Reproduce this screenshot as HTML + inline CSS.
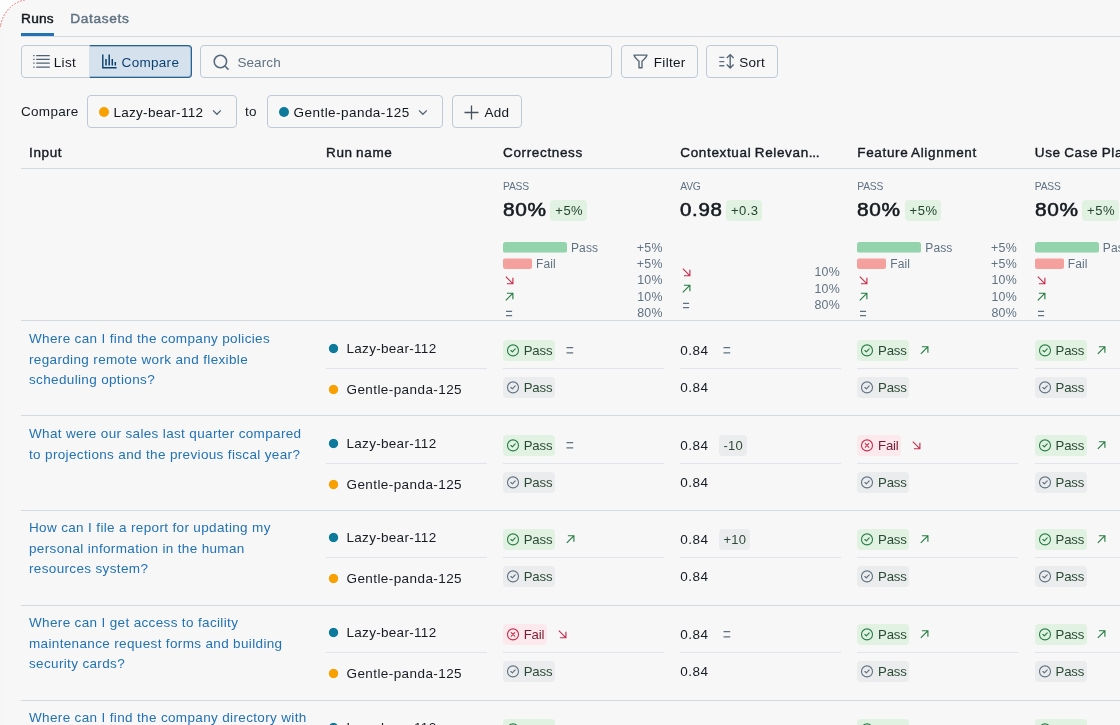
<!DOCTYPE html>
<html lang="en">
<head>
<meta charset="utf-8">
<title>Runs – Compare</title>
<style>
*{box-sizing:border-box;margin:0;padding:0}
html,body{width:1120px;height:725px;overflow:hidden;background:#f7f7f7}
body{font-family:"Liberation Sans",sans-serif;font-size:13.5px;color:#161c22;position:relative;letter-spacing:.3px}
svg{display:block;flex:none;overflow:visible}
#app{position:absolute;left:0;top:0;width:1120px;height:725px;overflow:hidden;will-change:transform}
.corner{position:absolute;left:0;top:0;width:30px;height:30px}
.edge{position:absolute;left:0;top:27px;width:2px;height:698px;background:#f6f6f6}
.tabs{position:absolute;left:21px;top:0;right:0;height:37px;border-bottom:1px solid #d1d9e1}
.tab{position:absolute;top:11px;font-weight:normal;-webkit-text-stroke:.45px currentColor;font-size:13.7px;line-height:16px;letter-spacing:.25px}
.tab.on{left:0;color:#11171c}
.tab.off{left:49.3px;color:#5f7281;letter-spacing:.65px}
.tab.on:after{content:"";position:absolute;left:-.5px;right:-.3px;top:22px;height:3px;background:#2272b4}
.btn{position:absolute;height:33px;border:1px solid #bdc9d6;border-radius:4px;display:flex;align-items:center;font-size:13.5px;color:#11171c;padding-top:1px}
.seg{left:21px;top:45px;width:170.5px}
.seg .on{position:absolute;left:67px;top:-1px;width:102.5px;height:33px;padding-top:1px;border:1px solid #2a628f;border-left-color:#d5e1ed;border-radius:0 4px 4px 0;background:#d5e1ed;color:#0c4272;box-shadow:inset 0 1px 0 rgba(14,83,139,.28),inset 0 -1px 0 rgba(14,83,139,.28),inset -1px 0 0 rgba(14,83,139,.28);display:flex;align-items:center}
.cmp{position:absolute;left:21px;top:104px;line-height:16px}
.to{position:absolute;left:245px;top:104px;line-height:16px}
.dot{display:inline-block;width:10px;height:10px;border-radius:50%;flex:none}
.dot.org{background:#f7a000}
.dot.teal{background:#0e7a9b}
.table{position:absolute;left:21px;top:137px;width:1200px}
.thead{display:flex;height:32px;border-bottom:1px solid #d1d9e1;font-weight:normal;-webkit-text-stroke:.4px currentColor;line-height:32px;letter-spacing:.65px;word-spacing:-1px;white-space:nowrap}
.thead b{font-weight:normal;letter-spacing:-.3px}
.c0{width:297px;flex:none;padding-left:8px}
.h,.s,.rn,.m{width:177.2px;flex:none;padding-left:8px}
.h.c0{width:297px}
.w1{width:177px}.w2{width:177.3px}.w3{width:177px}.w4{width:177.5px}.w5{width:177px}
.summary{display:flex;height:152px;border-bottom:1px solid #d1d9e1}
.row{display:flex;height:95px;border-bottom:1px solid #d1d9e1}
.q{color:#2272b4;line-height:20.6px;padding-top:8px;letter-spacing:.35px;white-space:nowrap}
.s{position:relative}
.row.up>div{position:relative;top:-1px}
.lbl{position:absolute;left:8px;top:12px;font-size:10.3px;line-height:12px;color:#5f7281;letter-spacing:-.2px}
.bigrow{position:absolute;left:8px;top:30px;height:21px;display:flex;align-items:center}
.big{font-size:18.6px;font-weight:normal;-webkit-text-stroke:.55px #11171c;letter-spacing:.6px;line-height:21px;display:inline-block;width:42px;white-space:nowrap}
.big i{font-style:normal;display:inline-block;transform:scaleX(1.12);transform-origin:0 50%}
.bd{margin-left:5.3px;height:21px;line-height:21px;padding:0 4px 0 5px;border-radius:4px;background:#e1f2e3;color:#22452c;font-size:13px;letter-spacing:.5px;position:relative;top:1px}
.dist{position:absolute;left:8px;top:71px;width:159.7px;height:83px;font-size:12.4px;color:#5f7281;letter-spacing:.2px}
.dist.c{top:95px}
.big.v{width:40.5px}
.big.v i{transform:scaleX(1.1)}
.big.v + .bd{padding:0 3.6px 0 4.8px;letter-spacing:.5px}
.dl{height:16px;position:relative}
.dl.t{height:17px}
.bar{height:11px;border-radius:2.5px;position:absolute;left:0;top:2px}
.bar.g{width:64px;background:linear-gradient(to bottom,#93d4ad 0,#93d4ad 10px,rgba(147,212,173,.55) 10px)}
.bar.r{width:29px;background:linear-gradient(to bottom,rgba(244,160,157,.5) 0,rgba(244,160,157,.5) 1px,#f4a09d 1px)}
.pv{position:absolute;right:0;top:0;line-height:16px;letter-spacing:.25px}
.bt{font-size:12px;letter-spacing:.1px;position:absolute;top:0;line-height:16px}
.bar.g + .bt{left:68px}
.bar.r + .bt{left:33px}
.ar{width:11px;height:11px}
.ar.up{color:#277c43}
.ar.down{color:#c82d4c}
.ar.eq{color:#5f7281}
.dl .ar{position:absolute;left:1px;top:0;width:11px;height:100%}
.rn,.m{position:relative}
.r1{position:absolute;left:8px;top:19px;height:21px;width:161px;display:flex;align-items:center}
.r2{position:absolute;left:8px;top:56px;height:21px;width:161px;display:flex;align-items:center}
.rn .r1{top:16.5px;left:8px}
.rn .r2{top:57.5px;left:8px}
.rn:after,.m:after{content:"";position:absolute;left:8px;width:161px;top:47px;height:1px;background:#e0e5ea}
.rn .dot{width:11px;height:11px;margin-left:2.3px;border-radius:0;background:none}
.rn .dot.teal{background:radial-gradient(circle at 50% 50%,#0e7a9b 4.2px,rgba(14,122,155,0) 5.1px)}
.rn .dot.org{background:radial-gradient(circle at 50% 50%,#f7a000 4.2px,rgba(247,160,0,0) 5.1px)}
.rn .nm{margin-left:7.2px}
.nm{margin-left:8px}
.r2 .nm{letter-spacing:.42px}
.tag{display:inline-flex;align-items:center;height:21px;border-radius:4px;padding:0 2.6px 0 3px;font-size:13.2px;letter-spacing:-.15px;color:#2a4a33}

.tag.pass{background:#e1f2e3}
.tag.fail{background:#fbe9ed;color:#7a1c31}
.tag.base{background:#ebecee}
.tag .ci{width:14px;height:15px;margin-right:3.7px}
.tag.pass .ci{color:#277c43}
.tag.fail .ci{color:#c82d4c}
.tag.base .ci{color:#5f7281}
.r1 .ar{margin-left:9.7px}
.num{width:30px;letter-spacing:.5px;white-space:nowrap}
.delta{margin-left:8.7px;height:21px;line-height:21px;padding:0 3.6px 0 4.6px;border-radius:4px;background:#ebecee;font-size:13px;letter-spacing:.2px;color:#2f4a36}
.m.n .ar{margin-left:11.5px}
</style>
</head>
<body>
<div id="app">
<svg class="corner" viewBox="0 0 30 30"><path d="M0 0H25L22.6 0.4L19.6 1.4L17.4 2.4L15.4 3.5L12.4 5.5L8.4 9.2L6.5 11.4L3.5 16.4L1.5 21.6L0.3 27Z" fill="#fdfdfd"/><path d="M24.5 0L22.6 0.4L19.6 1.4L17.4 2.4L15.4 3.5L12.4 5.5L8.4 9.2L6.5 11.4L3.5 16.4L1.5 21.6L0.4 26.4" fill="none" stroke="#ee6a62" stroke-width="1" stroke-dasharray="0.9 2.3" stroke-linecap="round"/><path d="M0.4 25.4V28" stroke="#f08a84" stroke-width="1" fill="none"/></svg>
<div class="edge"></div>
<div class="tabs"><div class="tab on">Runs</div><div class="tab off">Datasets</div></div>

<div class="btn seg">
  <svg style="margin-left:11px;position:relative;top:-1px" width="18" height="14" viewBox="0 0 18 14"><path d="M0.2 1.6h1.4M0.2 5.4h1.4M0.2 9.2h1.4M0.2 13h1.4" stroke="#4f6274" stroke-width="1.25" fill="none"/><path d="M3.2 1.6h13.6M3.2 5.4h13.6M3.2 9.2h13.6M3.2 13h13.6" stroke="#4f6274" stroke-width="1.25" fill="none"/></svg>
  <span style="margin-left:2.8px">List</span>
  <div class="on">
    <svg style="margin-left:12px;position:relative;top:-1px" width="15" height="15" viewBox="0 0 15 15"><path d="M0.8 0.4V13.8H14.6" stroke="#0b3f6c" stroke-width="1.4" fill="none"/><path d="M4.0 4.9v6.7M7.2 0.6v11M10.3 4.9v6.7M13.3 8v3.6" stroke="#0b3f6c" stroke-width="1.5" fill="none"/></svg>
    <span style="margin-left:4.6px">Compare</span>
  </div>
</div>
<div class="btn" style="left:200px;top:45px;width:412px;color:#5f7281">
  <svg style="margin-left:12px" width="16" height="16" viewBox="0 0 16 16"><circle cx="7.4" cy="7.5" r="6.2" stroke="#566a7b" stroke-width="1.55" fill="none"/><path d="M11.9 12l3.6 3.6" stroke="#566a7b" stroke-width="1.55" fill="none"/></svg>
  <span style="margin-left:8.4px;letter-spacing:.1px">Search</span>
</div>
<div class="btn" style="left:621px;top:45px;width:77px">
  <svg style="margin-left:11.3px;position:relative;top:-1px" width="15" height="16" viewBox="0 0 15 16"><path d="M1 2.1h13c-0.3 1.6-2.2 3.6-5 6.2v6.4h-3v-6.4c-2.8-2.6-4.7-4.6-5-6.2z" stroke="#536474" stroke-width="1.35" fill="none" stroke-linejoin="round"/></svg>
  <span style="margin-left:5.5px">Filter</span>
</div>
<div class="btn" style="left:706px;top:45px;width:72px">
  <svg style="margin-left:11.7px;position:relative;top:-1px" width="16" height="16" viewBox="0 0 16 16"><path d="M0.3 4.4h5M0.3 8.6h5M0.3 12.8h5" stroke="#5f7281" stroke-width="1.4" fill="none"/><path d="M11.2 1.6v13.4M7.8 5l3.4-3.4 3.4 3.4M7.8 11.6l3.4 3.4 3.4-3.4" stroke="#536474" stroke-width="1.35" fill="none"/></svg>
  <span style="margin-left:4.5px">Sort</span>
</div>

<div class="cmp">Compare</div>
<div class="btn" style="left:87px;top:95px;width:150px">
  <span class="dot org" style="margin-left:10.8px"></span><span style="margin-left:4.6px">Lazy-bear-112</span>
  <svg style="margin-left:8.4px" width="10" height="7" viewBox="0 0 10 7"><path d="M1 1.4l3.9 3.9 3.9-3.9" stroke="#536474" stroke-width="1.3" fill="none"/></svg>
</div>
<div class="to">to</div>
<div class="btn" style="left:267px;top:95px;width:176px">
  <span class="dot teal" style="margin-left:10.8px"></span><span style="margin-left:4.8px;letter-spacing:.45px">Gentle-panda-125</span>
  <svg style="margin-left:8.4px" width="10" height="7" viewBox="0 0 10 7"><path d="M1 1.4l3.9 3.9 3.9-3.9" stroke="#536474" stroke-width="1.3" fill="none"/></svg>
</div>
<div class="btn" style="left:451.5px;top:95px;width:70.5px">
  <svg style="margin-left:11.7px" width="15" height="15" viewBox="0 0 15 15"><path d="M7.5 0.5v14M0.5 7.5h14" stroke="#44535f" stroke-width="1.3" fill="none"/></svg>
  <span style="margin-left:5.3px">Add</span>
</div>

<div class="table">
<div class="thead"><div class="h c0">Input</div><div class="h w1">Run name</div><div class="h w2">Correctness</div><div class="h w3">Contextual Relevan<b>...</b></div><div class="h w4">Feature Alignment</div><div class="h w5">Use Case Pla</div></div>
<div class="summary"><div class="c0"></div><div class="s w1"></div><div class="s w2"><div class="lbl">PASS</div><div class="bigrow"><span class="big"><i>80%</i></span><span class="bd">+5%</span></div><div class="dist"><div class="dl"><span class="bar g"></span><span class="bt">Pass</span><span class="pv">+5%</span></div><div class="dl"><span class="bar r"></span><span class="bt">Fail</span><span class="pv">+5%</span></div><div class="dl t"><svg class="ar down" viewBox="0 0 11 11"><path d="M1.8 1.6 L8.8 8.6 M2.9 8.7 H8.9 V2.7" fill="none" stroke="currentColor" stroke-width="1.15"/></svg><span class="pv">10%</span></div><div class="dl"><svg class="ar up" viewBox="0 0 11 11"><path d="M1.8 8.8 L8.8 1.8 M2.9 1.7 H8.9 V7.7" fill="none" stroke="currentColor" stroke-width="1.15"/></svg><span class="pv">10%</span></div><div class="dl"><svg class="ar eq" viewBox="0 0 11 11"><path d="M2 3.9 H8.1 M2 8.2 H8.1" fill="none" stroke="currentColor" stroke-width="1.2"/></svg><span class="pv">80%</span></div></div></div><div class="s w3"><div class="lbl">AVG</div><div class="bigrow"><span class="big v"><i>0.98</i></span><span class="bd">+0.3</span></div><div class="dist c"><div class="dl t"><svg class="ar down" viewBox="0 0 11 11"><path d="M1.8 1.6 L8.8 8.6 M2.9 8.7 H8.9 V2.7" fill="none" stroke="currentColor" stroke-width="1.15"/></svg><span class="pv">10%</span></div><div class="dl"><svg class="ar up" viewBox="0 0 11 11"><path d="M1.8 8.8 L8.8 1.8 M2.9 1.7 H8.9 V7.7" fill="none" stroke="currentColor" stroke-width="1.15"/></svg><span class="pv">10%</span></div><div class="dl"><svg class="ar eq" viewBox="0 0 11 11"><path d="M2 3.9 H8.1 M2 8.2 H8.1" fill="none" stroke="currentColor" stroke-width="1.2"/></svg><span class="pv">80%</span></div></div></div><div class="s w4"><div class="lbl">PASS</div><div class="bigrow"><span class="big"><i>80%</i></span><span class="bd">+5%</span></div><div class="dist"><div class="dl"><span class="bar g"></span><span class="bt">Pass</span><span class="pv">+5%</span></div><div class="dl"><span class="bar r"></span><span class="bt">Fail</span><span class="pv">+5%</span></div><div class="dl t"><svg class="ar down" viewBox="0 0 11 11"><path d="M1.8 1.6 L8.8 8.6 M2.9 8.7 H8.9 V2.7" fill="none" stroke="currentColor" stroke-width="1.15"/></svg><span class="pv">10%</span></div><div class="dl"><svg class="ar up" viewBox="0 0 11 11"><path d="M1.8 8.8 L8.8 1.8 M2.9 1.7 H8.9 V7.7" fill="none" stroke="currentColor" stroke-width="1.15"/></svg><span class="pv">10%</span></div><div class="dl"><svg class="ar eq" viewBox="0 0 11 11"><path d="M2 3.9 H8.1 M2 8.2 H8.1" fill="none" stroke="currentColor" stroke-width="1.2"/></svg><span class="pv">80%</span></div></div></div><div class="s w5"><div class="lbl">PASS</div><div class="bigrow"><span class="big"><i>80%</i></span><span class="bd">+5%</span></div><div class="dist"><div class="dl"><span class="bar g"></span><span class="bt">Pass</span><span class="pv">+5%</span></div><div class="dl"><span class="bar r"></span><span class="bt">Fail</span><span class="pv">+5%</span></div><div class="dl t"><svg class="ar down" viewBox="0 0 11 11"><path d="M1.8 1.6 L8.8 8.6 M2.9 8.7 H8.9 V2.7" fill="none" stroke="currentColor" stroke-width="1.15"/></svg><span class="pv">10%</span></div><div class="dl"><svg class="ar up" viewBox="0 0 11 11"><path d="M1.8 8.8 L8.8 1.8 M2.9 1.7 H8.9 V7.7" fill="none" stroke="currentColor" stroke-width="1.15"/></svg><span class="pv">10%</span></div><div class="dl"><svg class="ar eq" viewBox="0 0 11 11"><path d="M2 3.9 H8.1 M2 8.2 H8.1" fill="none" stroke="currentColor" stroke-width="1.2"/></svg><span class="pv">80%</span></div></div></div></div>
<div class="row"><div class="c0 q">Where can I find the company policies<br>regarding remote work and flexible<br>scheduling options?</div><div class="rn w1"><div class="r1"><span class="dot teal"></span><span class="nm">Lazy-bear-112</span></div><div class="r2"><span class="dot org"></span><span class="nm">Gentle-panda-125</span></div></div><div class="m w2"><div class="r1"><span class="tag pass"><svg class="ci" viewBox="0 0 14 15"><circle cx="7" cy="7.4" r="5.5" fill="none" stroke="currentColor" stroke-width="1.1"/><path d="M4.9 7.5 L6.4 8.8 L9.2 5.9" fill="none" stroke="currentColor" stroke-width="1.15" stroke-linecap="round" stroke-linejoin="round"/></svg><span>Pass</span></span><svg class="ar eq" viewBox="0 0 11 11"><path d="M1.5 2.7 H8.2 M1.5 7.9 H8.2" fill="none" stroke="currentColor" stroke-width="1.2"/></svg></div><div class="r2"><span class="tag base"><svg class="ci" viewBox="0 0 14 15"><circle cx="7" cy="7.4" r="5.5" fill="none" stroke="currentColor" stroke-width="1.1"/><path d="M4.9 7.5 L6.4 8.8 L9.2 5.9" fill="none" stroke="currentColor" stroke-width="1.15" stroke-linecap="round" stroke-linejoin="round"/></svg><span>Pass</span></span></div></div><div class="m w3 n"><div class="r1"><span class="num">0.84</span><svg class="ar eq" viewBox="0 0 11 11"><path d="M1.5 2.7 H8.2 M1.5 7.9 H8.2" fill="none" stroke="currentColor" stroke-width="1.2"/></svg></div><div class="r2"><span class="num">0.84</span></div></div><div class="m w4"><div class="r1"><span class="tag pass"><svg class="ci" viewBox="0 0 14 15"><circle cx="7" cy="7.4" r="5.5" fill="none" stroke="currentColor" stroke-width="1.1"/><path d="M4.9 7.5 L6.4 8.8 L9.2 5.9" fill="none" stroke="currentColor" stroke-width="1.15" stroke-linecap="round" stroke-linejoin="round"/></svg><span>Pass</span></span><svg class="ar up" viewBox="0 0 11 11"><path d="M1.8 8.8 L8.8 1.8 M2.9 1.7 H8.9 V7.7" fill="none" stroke="currentColor" stroke-width="1.15"/></svg></div><div class="r2"><span class="tag base"><svg class="ci" viewBox="0 0 14 15"><circle cx="7" cy="7.4" r="5.5" fill="none" stroke="currentColor" stroke-width="1.1"/><path d="M4.9 7.5 L6.4 8.8 L9.2 5.9" fill="none" stroke="currentColor" stroke-width="1.15" stroke-linecap="round" stroke-linejoin="round"/></svg><span>Pass</span></span></div></div><div class="m w5"><div class="r1"><span class="tag pass"><svg class="ci" viewBox="0 0 14 15"><circle cx="7" cy="7.4" r="5.5" fill="none" stroke="currentColor" stroke-width="1.1"/><path d="M4.9 7.5 L6.4 8.8 L9.2 5.9" fill="none" stroke="currentColor" stroke-width="1.15" stroke-linecap="round" stroke-linejoin="round"/></svg><span>Pass</span></span><svg class="ar up" viewBox="0 0 11 11"><path d="M1.8 8.8 L8.8 1.8 M2.9 1.7 H8.9 V7.7" fill="none" stroke="currentColor" stroke-width="1.15"/></svg></div><div class="r2"><span class="tag base"><svg class="ci" viewBox="0 0 14 15"><circle cx="7" cy="7.4" r="5.5" fill="none" stroke="currentColor" stroke-width="1.1"/><path d="M4.9 7.5 L6.4 8.8 L9.2 5.9" fill="none" stroke="currentColor" stroke-width="1.15" stroke-linecap="round" stroke-linejoin="round"/></svg><span>Pass</span></span></div></div></div>
<div class="row"><div class="c0 q">What were our sales last quarter compared<br>to projections and the previous fiscal year?</div><div class="rn w1"><div class="r1"><span class="dot teal"></span><span class="nm">Lazy-bear-112</span></div><div class="r2"><span class="dot org"></span><span class="nm">Gentle-panda-125</span></div></div><div class="m w2"><div class="r1"><span class="tag pass"><svg class="ci" viewBox="0 0 14 15"><circle cx="7" cy="7.4" r="5.5" fill="none" stroke="currentColor" stroke-width="1.1"/><path d="M4.9 7.5 L6.4 8.8 L9.2 5.9" fill="none" stroke="currentColor" stroke-width="1.15" stroke-linecap="round" stroke-linejoin="round"/></svg><span>Pass</span></span><svg class="ar eq" viewBox="0 0 11 11"><path d="M1.5 2.7 H8.2 M1.5 7.9 H8.2" fill="none" stroke="currentColor" stroke-width="1.2"/></svg></div><div class="r2"><span class="tag base"><svg class="ci" viewBox="0 0 14 15"><circle cx="7" cy="7.4" r="5.5" fill="none" stroke="currentColor" stroke-width="1.1"/><path d="M4.9 7.5 L6.4 8.8 L9.2 5.9" fill="none" stroke="currentColor" stroke-width="1.15" stroke-linecap="round" stroke-linejoin="round"/></svg><span>Pass</span></span></div></div><div class="m w3 n"><div class="r1"><span class="num">0.84</span><span class="delta">-10</span></div><div class="r2"><span class="num">0.84</span></div></div><div class="m w4"><div class="r1"><span class="tag fail"><svg class="ci" viewBox="0 0 14 15"><circle cx="7" cy="7.4" r="5.5" fill="none" stroke="currentColor" stroke-width="1.1"/><path d="M5.3 5.7 L8.7 9.1 M8.7 5.7 L5.3 9.1" fill="none" stroke="currentColor" stroke-width="1.15" stroke-linecap="round"/></svg><span>Fail</span></span><svg class="ar down" viewBox="0 0 11 11"><path d="M1.8 1.6 L8.8 8.6 M2.9 8.7 H8.9 V2.7" fill="none" stroke="currentColor" stroke-width="1.15"/></svg></div><div class="r2"><span class="tag base"><svg class="ci" viewBox="0 0 14 15"><circle cx="7" cy="7.4" r="5.5" fill="none" stroke="currentColor" stroke-width="1.1"/><path d="M4.9 7.5 L6.4 8.8 L9.2 5.9" fill="none" stroke="currentColor" stroke-width="1.15" stroke-linecap="round" stroke-linejoin="round"/></svg><span>Pass</span></span></div></div><div class="m w5"><div class="r1"><span class="tag pass"><svg class="ci" viewBox="0 0 14 15"><circle cx="7" cy="7.4" r="5.5" fill="none" stroke="currentColor" stroke-width="1.1"/><path d="M4.9 7.5 L6.4 8.8 L9.2 5.9" fill="none" stroke="currentColor" stroke-width="1.15" stroke-linecap="round" stroke-linejoin="round"/></svg><span>Pass</span></span><svg class="ar up" viewBox="0 0 11 11"><path d="M1.8 8.8 L8.8 1.8 M2.9 1.7 H8.9 V7.7" fill="none" stroke="currentColor" stroke-width="1.15"/></svg></div><div class="r2"><span class="tag base"><svg class="ci" viewBox="0 0 14 15"><circle cx="7" cy="7.4" r="5.5" fill="none" stroke="currentColor" stroke-width="1.1"/><path d="M4.9 7.5 L6.4 8.8 L9.2 5.9" fill="none" stroke="currentColor" stroke-width="1.15" stroke-linecap="round" stroke-linejoin="round"/></svg><span>Pass</span></span></div></div></div>
<div class="row up"><div class="c0 q">How can I file a report for updating my<br>personal information in the human<br>resources system?</div><div class="rn w1"><div class="r1"><span class="dot teal"></span><span class="nm">Lazy-bear-112</span></div><div class="r2"><span class="dot org"></span><span class="nm">Gentle-panda-125</span></div></div><div class="m w2"><div class="r1"><span class="tag pass"><svg class="ci" viewBox="0 0 14 15"><circle cx="7" cy="7.4" r="5.5" fill="none" stroke="currentColor" stroke-width="1.1"/><path d="M4.9 7.5 L6.4 8.8 L9.2 5.9" fill="none" stroke="currentColor" stroke-width="1.15" stroke-linecap="round" stroke-linejoin="round"/></svg><span>Pass</span></span><svg class="ar up" viewBox="0 0 11 11"><path d="M1.8 8.8 L8.8 1.8 M2.9 1.7 H8.9 V7.7" fill="none" stroke="currentColor" stroke-width="1.15"/></svg></div><div class="r2"><span class="tag base"><svg class="ci" viewBox="0 0 14 15"><circle cx="7" cy="7.4" r="5.5" fill="none" stroke="currentColor" stroke-width="1.1"/><path d="M4.9 7.5 L6.4 8.8 L9.2 5.9" fill="none" stroke="currentColor" stroke-width="1.15" stroke-linecap="round" stroke-linejoin="round"/></svg><span>Pass</span></span></div></div><div class="m w3 n"><div class="r1"><span class="num">0.84</span><span class="delta">+10</span></div><div class="r2"><span class="num">0.84</span></div></div><div class="m w4"><div class="r1"><span class="tag pass"><svg class="ci" viewBox="0 0 14 15"><circle cx="7" cy="7.4" r="5.5" fill="none" stroke="currentColor" stroke-width="1.1"/><path d="M4.9 7.5 L6.4 8.8 L9.2 5.9" fill="none" stroke="currentColor" stroke-width="1.15" stroke-linecap="round" stroke-linejoin="round"/></svg><span>Pass</span></span><svg class="ar up" viewBox="0 0 11 11"><path d="M1.8 8.8 L8.8 1.8 M2.9 1.7 H8.9 V7.7" fill="none" stroke="currentColor" stroke-width="1.15"/></svg></div><div class="r2"><span class="tag base"><svg class="ci" viewBox="0 0 14 15"><circle cx="7" cy="7.4" r="5.5" fill="none" stroke="currentColor" stroke-width="1.1"/><path d="M4.9 7.5 L6.4 8.8 L9.2 5.9" fill="none" stroke="currentColor" stroke-width="1.15" stroke-linecap="round" stroke-linejoin="round"/></svg><span>Pass</span></span></div></div><div class="m w5"><div class="r1"><span class="tag pass"><svg class="ci" viewBox="0 0 14 15"><circle cx="7" cy="7.4" r="5.5" fill="none" stroke="currentColor" stroke-width="1.1"/><path d="M4.9 7.5 L6.4 8.8 L9.2 5.9" fill="none" stroke="currentColor" stroke-width="1.15" stroke-linecap="round" stroke-linejoin="round"/></svg><span>Pass</span></span><svg class="ar up" viewBox="0 0 11 11"><path d="M1.8 8.8 L8.8 1.8 M2.9 1.7 H8.9 V7.7" fill="none" stroke="currentColor" stroke-width="1.15"/></svg></div><div class="r2"><span class="tag base"><svg class="ci" viewBox="0 0 14 15"><circle cx="7" cy="7.4" r="5.5" fill="none" stroke="currentColor" stroke-width="1.1"/><path d="M4.9 7.5 L6.4 8.8 L9.2 5.9" fill="none" stroke="currentColor" stroke-width="1.15" stroke-linecap="round" stroke-linejoin="round"/></svg><span>Pass</span></span></div></div></div>
<div class="row up"><div class="c0 q">Where can I get access to facility<br>maintenance request forms and building<br>security cards?</div><div class="rn w1"><div class="r1"><span class="dot teal"></span><span class="nm">Lazy-bear-112</span></div><div class="r2"><span class="dot org"></span><span class="nm">Gentle-panda-125</span></div></div><div class="m w2"><div class="r1"><span class="tag fail"><svg class="ci" viewBox="0 0 14 15"><circle cx="7" cy="7.4" r="5.5" fill="none" stroke="currentColor" stroke-width="1.1"/><path d="M5.3 5.7 L8.7 9.1 M8.7 5.7 L5.3 9.1" fill="none" stroke="currentColor" stroke-width="1.15" stroke-linecap="round"/></svg><span>Fail</span></span><svg class="ar down" viewBox="0 0 11 11"><path d="M1.8 1.6 L8.8 8.6 M2.9 8.7 H8.9 V2.7" fill="none" stroke="currentColor" stroke-width="1.15"/></svg></div><div class="r2"><span class="tag base"><svg class="ci" viewBox="0 0 14 15"><circle cx="7" cy="7.4" r="5.5" fill="none" stroke="currentColor" stroke-width="1.1"/><path d="M4.9 7.5 L6.4 8.8 L9.2 5.9" fill="none" stroke="currentColor" stroke-width="1.15" stroke-linecap="round" stroke-linejoin="round"/></svg><span>Pass</span></span></div></div><div class="m w3 n"><div class="r1"><span class="num">0.84</span><svg class="ar eq" viewBox="0 0 11 11"><path d="M1.5 2.7 H8.2 M1.5 7.9 H8.2" fill="none" stroke="currentColor" stroke-width="1.2"/></svg></div><div class="r2"><span class="num">0.84</span></div></div><div class="m w4"><div class="r1"><span class="tag pass"><svg class="ci" viewBox="0 0 14 15"><circle cx="7" cy="7.4" r="5.5" fill="none" stroke="currentColor" stroke-width="1.1"/><path d="M4.9 7.5 L6.4 8.8 L9.2 5.9" fill="none" stroke="currentColor" stroke-width="1.15" stroke-linecap="round" stroke-linejoin="round"/></svg><span>Pass</span></span><svg class="ar up" viewBox="0 0 11 11"><path d="M1.8 8.8 L8.8 1.8 M2.9 1.7 H8.9 V7.7" fill="none" stroke="currentColor" stroke-width="1.15"/></svg></div><div class="r2"><span class="tag base"><svg class="ci" viewBox="0 0 14 15"><circle cx="7" cy="7.4" r="5.5" fill="none" stroke="currentColor" stroke-width="1.1"/><path d="M4.9 7.5 L6.4 8.8 L9.2 5.9" fill="none" stroke="currentColor" stroke-width="1.15" stroke-linecap="round" stroke-linejoin="round"/></svg><span>Pass</span></span></div></div><div class="m w5"><div class="r1"><span class="tag pass"><svg class="ci" viewBox="0 0 14 15"><circle cx="7" cy="7.4" r="5.5" fill="none" stroke="currentColor" stroke-width="1.1"/><path d="M4.9 7.5 L6.4 8.8 L9.2 5.9" fill="none" stroke="currentColor" stroke-width="1.15" stroke-linecap="round" stroke-linejoin="round"/></svg><span>Pass</span></span><svg class="ar up" viewBox="0 0 11 11"><path d="M1.8 8.8 L8.8 1.8 M2.9 1.7 H8.9 V7.7" fill="none" stroke="currentColor" stroke-width="1.15"/></svg></div><div class="r2"><span class="tag base"><svg class="ci" viewBox="0 0 14 15"><circle cx="7" cy="7.4" r="5.5" fill="none" stroke="currentColor" stroke-width="1.1"/><path d="M4.9 7.5 L6.4 8.8 L9.2 5.9" fill="none" stroke="currentColor" stroke-width="1.15" stroke-linecap="round" stroke-linejoin="round"/></svg><span>Pass</span></span></div></div></div>
<div class="row up"><div class="c0 q">Where can I find the company directory with</div><div class="rn w1"><div class="r1"><span class="dot teal"></span><span class="nm">Lazy-bear-112</span></div><div class="r2"><span class="dot org"></span><span class="nm">Gentle-panda-125</span></div></div><div class="m w2"><div class="r1"><span class="tag pass"><svg class="ci" viewBox="0 0 14 15"><circle cx="7" cy="7.4" r="5.5" fill="none" stroke="currentColor" stroke-width="1.1"/><path d="M4.9 7.5 L6.4 8.8 L9.2 5.9" fill="none" stroke="currentColor" stroke-width="1.15" stroke-linecap="round" stroke-linejoin="round"/></svg><span>Pass</span></span><svg class="ar eq" viewBox="0 0 11 11"><path d="M1.5 2.7 H8.2 M1.5 7.9 H8.2" fill="none" stroke="currentColor" stroke-width="1.2"/></svg></div><div class="r2"><span class="tag base"><svg class="ci" viewBox="0 0 14 15"><circle cx="7" cy="7.4" r="5.5" fill="none" stroke="currentColor" stroke-width="1.1"/><path d="M4.9 7.5 L6.4 8.8 L9.2 5.9" fill="none" stroke="currentColor" stroke-width="1.15" stroke-linecap="round" stroke-linejoin="round"/></svg><span>Pass</span></span></div></div><div class="m w3 n"><div class="r1"><span class="num">0.84</span><svg class="ar eq" viewBox="0 0 11 11"><path d="M1.5 2.7 H8.2 M1.5 7.9 H8.2" fill="none" stroke="currentColor" stroke-width="1.2"/></svg></div><div class="r2"><span class="num">0.84</span></div></div><div class="m w4"><div class="r1"><span class="tag pass"><svg class="ci" viewBox="0 0 14 15"><circle cx="7" cy="7.4" r="5.5" fill="none" stroke="currentColor" stroke-width="1.1"/><path d="M4.9 7.5 L6.4 8.8 L9.2 5.9" fill="none" stroke="currentColor" stroke-width="1.15" stroke-linecap="round" stroke-linejoin="round"/></svg><span>Pass</span></span><svg class="ar up" viewBox="0 0 11 11"><path d="M1.8 8.8 L8.8 1.8 M2.9 1.7 H8.9 V7.7" fill="none" stroke="currentColor" stroke-width="1.15"/></svg></div><div class="r2"><span class="tag base"><svg class="ci" viewBox="0 0 14 15"><circle cx="7" cy="7.4" r="5.5" fill="none" stroke="currentColor" stroke-width="1.1"/><path d="M4.9 7.5 L6.4 8.8 L9.2 5.9" fill="none" stroke="currentColor" stroke-width="1.15" stroke-linecap="round" stroke-linejoin="round"/></svg><span>Pass</span></span></div></div><div class="m w5"><div class="r1"><span class="tag pass"><svg class="ci" viewBox="0 0 14 15"><circle cx="7" cy="7.4" r="5.5" fill="none" stroke="currentColor" stroke-width="1.1"/><path d="M4.9 7.5 L6.4 8.8 L9.2 5.9" fill="none" stroke="currentColor" stroke-width="1.15" stroke-linecap="round" stroke-linejoin="round"/></svg><span>Pass</span></span><svg class="ar up" viewBox="0 0 11 11"><path d="M1.8 8.8 L8.8 1.8 M2.9 1.7 H8.9 V7.7" fill="none" stroke="currentColor" stroke-width="1.15"/></svg></div><div class="r2"><span class="tag base"><svg class="ci" viewBox="0 0 14 15"><circle cx="7" cy="7.4" r="5.5" fill="none" stroke="currentColor" stroke-width="1.1"/><path d="M4.9 7.5 L6.4 8.8 L9.2 5.9" fill="none" stroke="currentColor" stroke-width="1.15" stroke-linecap="round" stroke-linejoin="round"/></svg><span>Pass</span></span></div></div></div>
</div>
</div>
</body>
</html>
